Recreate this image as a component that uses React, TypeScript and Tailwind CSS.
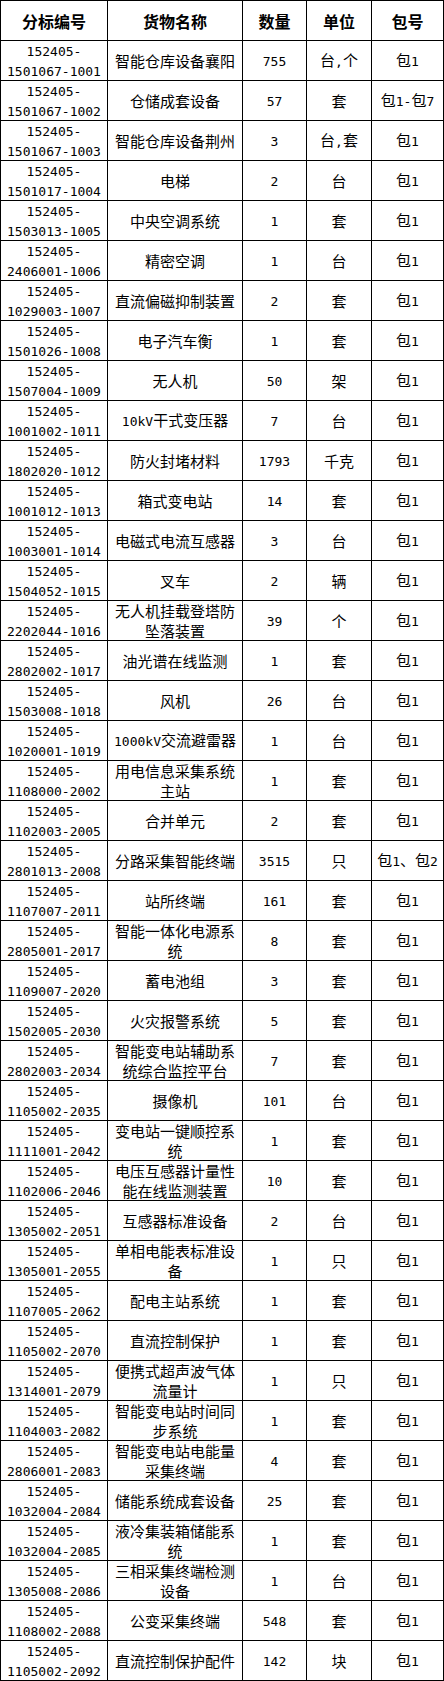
import React from "react";

type Row = [string, string, string, string, string];

const rows: Row[] = [
  ["1501067-1001", "智能仓库设备襄阳", "755", "台,个", "包1"],
  ["1501067-1002", "仓储成套设备", "57", "套", "包1-包7"],
  ["1501067-1003", "智能仓库设备荆州", "3", "台,套", "包1"],
  ["1501017-1004", "电梯", "2", "台", "包1"],
  ["1503013-1005", "中央空调系统", "1", "套", "包1"],
  ["2406001-1006", "精密空调", "1", "台", "包1"],
  ["1029003-1007", "直流偏磁抑制装置", "2", "套", "包1"],
  ["1501026-1008", "电子汽车衡", "1", "套", "包1"],
  ["1507004-1009", "无人机", "50", "架", "包1"],
  ["1001002-1011", "10kV干式变压器", "7", "台", "包1"],
  ["1802020-1012", "防火封堵材料", "1793", "千克", "包1"],
  ["1001012-1013", "箱式变电站", "14", "套", "包1"],
  ["1003001-1014", "电磁式电流互感器", "3", "台", "包1"],
  ["1504052-1015", "叉车", "2", "辆", "包1"],
  ["2202044-1016", "无人机挂载登塔防坠落装置", "39", "个", "包1"],
  ["2802002-1017", "油光谱在线监测", "1", "套", "包1"],
  ["1503008-1018", "风机", "26", "台", "包1"],
  ["1020001-1019", "1000kV交流避雷器", "1", "台", "包1"],
  ["1108000-2002", "用电信息采集系统主站", "1", "套", "包1"],
  ["1102003-2005", "合并单元", "2", "套", "包1"],
  ["2801013-2008", "分路采集智能终端", "3515", "只", "包1、包2"],
  ["1107007-2011", "站所终端", "161", "套", "包1"],
  ["2805001-2017", "智能一体化电源系统", "8", "套", "包1"],
  ["1109007-2020", "蓄电池组", "3", "套", "包1"],
  ["1502005-2030", "火灾报警系统", "5", "套", "包1"],
  ["2802003-2034", "智能变电站辅助系统综合监控平台", "7", "套", "包1"],
  ["1105002-2035", "摄像机", "101", "台", "包1"],
  ["1111001-2042", "变电站一键顺控系统", "1", "套", "包1"],
  ["1102006-2046", "电压互感器计量性能在线监测装置", "10", "套", "包1"],
  ["1305002-2051", "互感器标准设备", "2", "台", "包1"],
  ["1305001-2055", "单相电能表标准设备", "1", "只", "包1"],
  ["1107005-2062", "配电主站系统", "1", "套", "包1"],
  ["1105002-2070", "直流控制保护", "1", "套", "包1"],
  ["1314001-2079", "便携式超声波气体流量计", "1", "只", "包1"],
  ["1104003-2082", "智能变电站时间同步系统", "1", "套", "包1"],
  ["2806001-2083", "智能变电站电能量采集终端", "4", "套", "包1"],
  ["1032004-2084", "储能系统成套设备", "25", "套", "包1"],
  ["1032004-2085", "液冷集装箱储能系统", "1", "套", "包1"],
  ["1305008-2086", "三相采集终端检测设备", "1", "台", "包1"],
  ["1108002-2088", "公变采集终端", "548", "套", "包1"],
  ["1105002-2092", "直流控制保护配件", "142", "块", "包1"],
];

function Txt({ s }: { s: string }) {
  const parts = s.match(/[\x00-\x7F]+|[^\x00-\x7F]+/g) || [];
  return (
    <>
      {parts.map((p, i) =>
        /^[\x00-\x7F]/.test(p) ? (
          <span key={i} className="font-['DejaVu_Sans_Mono',monospace] text-[13px]">
            {p}
          </span>
        ) : (
          <span key={i}>{p}</span>
        )
      )}
    </>
  );
}

const cell =
  "flex items-center justify-center text-center border-r border-b border-black h-[40px] leading-[20px] text-[15px] text-black";

export default function App() {
  const headers = ["分标编号", "货物名称", "数量", "单位", "包号"];
  return (
    <div className="w-[444px] bg-white font-['Noto_Sans_CJK_SC',sans-serif]">
      <div className="grid grid-cols-[107px_135px_64px_65px_72px] border-l border-t border-black">
        {headers.map((h) => (
          <div
            key={h}
            className="flex items-center justify-center border-r border-b border-black h-[40px] text-[16px] font-bold text-black"
          >
            {h}
          </div>
        ))}
        {rows.map((r) => (
          <React.Fragment key={r[0]}>
            <div className={cell}>
              <span className="font-['DejaVu_Sans_Mono',monospace] text-[13px] leading-[20px] pt-[2px]">
                152405-
                <br />
                {r[0]}
              </span>
            </div>
            <div className={cell + " px-[6px]"}>
              <span>
                <Txt s={r[1]} />
              </span>
            </div>
            <div className={cell + " pt-[2px]"}>
              <Txt s={r[2]} />
            </div>
            <div className={cell}>
              <span>
                <Txt s={r[3]} />
              </span>
            </div>
            <div className={cell}>
              <span>
                <Txt s={r[4]} />
              </span>
            </div>
          </React.Fragment>
        ))}
      </div>
    </div>
  );
}
